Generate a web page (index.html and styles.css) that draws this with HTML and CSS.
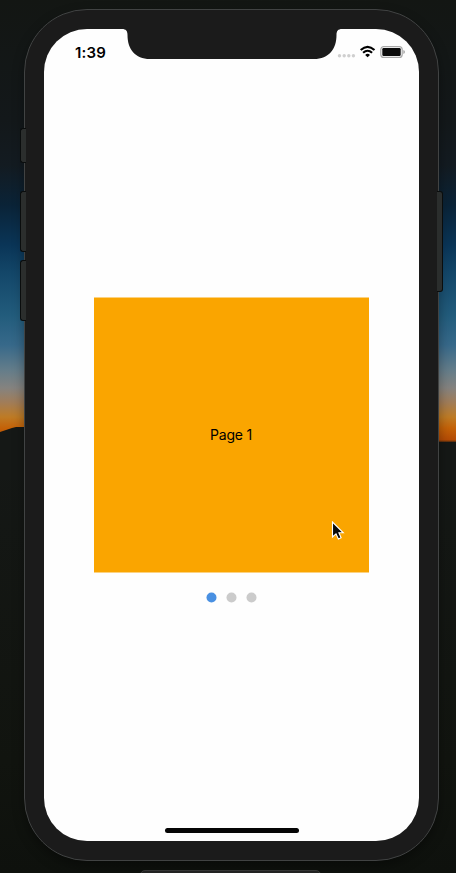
FILE: index.html
```
<!DOCTYPE html>
<html lang="en">
<head>
<meta charset="utf-8">
<title>Pager</title>
<link rel="stylesheet" href="styles.css">
</head>
<body>
<div class="desktop">
  <svg class="ridge" viewBox="0 0 456 60" width="456" height="60" aria-hidden="true">
    <path d="M0 12L6 10L12 8L16 7H25L439 22H456V60H0Z" fill="#151816"/>
  </svg>
  <main class="phone">
    <span class="key key-mute"></span>
    <span class="key key-up"></span>
    <span class="key key-down"></span>
    <span class="key key-power"></span>
    <div class="screen">
      <svg class="notch" viewBox="0 0 220 30" width="220" height="30" aria-hidden="true">
        <path d="M0 0C4 0 5.500 2 5.500 6C5.500 20 13 30 28 30H192C207 30 214.500 20 214.500 6C214.500 2 216 0 220 0Z" fill="#1b1b1b"/>
      </svg>
      <header class="status">
        <span class="time">1:39</span>
        <svg class="indicators" viewBox="0 0 68 16" width="68" height="16" aria-hidden="true">
          <g fill="#cfcfcf">
            <circle cx="2.500" cy="11.800" r="1.700"/><circle cx="7.200" cy="11.800" r="1.700"/><circle cx="11.800" cy="11.800" r="1.700"/><circle cx="16.400" cy="11.800" r="1.700"/>
          </g>
          <g fill="none" stroke="#000" stroke-width="2.100">
            <path d="M23.700 6.100Q30.600 -.3 37.500 6.100"/>
            <path d="M26.100 8.800Q30.600 4.700 35.100 8.800"/>
          </g>
          <path d="M28.200 10.900Q30.600 8.800 33 10.900L30.600 13.300Z"/>
          <rect x="43.800" y="2.600" width="21.400" height="10.800" rx="3" fill="#fff" stroke="#a9a9a9" stroke-width="1.200"/>
          <rect x="45.300" y="4.100" width="18.400" height="7.800" rx="1.200" fill="#0b0b0b"/>
          <path d="M66.300 6Q68 6.600 68 8T66.300 10Z" fill="#a9a9a9"/>
        </svg>
      </header>
      <section class="pager">
        <div class="page"><span class="label">Page 1</span></div>
        <svg class="dots" viewBox="0 0 52 12" width="52" height="12" aria-hidden="true">
          <circle cx="5.500" cy="5.500" r="5" fill="#4990e2"/>
          <circle cx="25.500" cy="5.500" r="5" fill="#cbcbcb"/>
          <circle cx="45.500" cy="5.500" r="5" fill="#cbcbcb"/>
        </svg>
      </section>
      <div class="home"></div>
    </div>
  </main>
  <div class="toolbar"></div>
  <svg class="cursor" viewBox="0 0 14 20" width="14" height="20" aria-hidden="true">
    <path d="M1.500 1V16L5 12.800L7.400 18L10.100 16.800L7.900 11.800H12.300Z" fill="#0a0a0a" stroke="#fff" stroke-width="1.100"/>
  </svg>
</div>
</body>
</html>
```
FILE: styles.css
```
* {
  box-sizing: border-box;
}

body {
  margin: 0;
  font-family: Inter, "Liberation Sans", sans-serif;
  color: #000;
}

.desktop {
  position: relative;
  width: 456px;
  height: 873px;
  overflow: hidden;
  padding: 9px 17px 0 24px;
  background: linear-gradient(#131613 0, #13181a 120px, #131b21 165px, #0a2337 205px, #0a3557 245px, #14486a 275px, #225c7c 315px, #37698a 345px, #647d8a 370px, #85837f 388px, #a07d5a 402px, #be7b25 417px, #c46208 428px, #b44b05 440px, #151816 443px, #11140f 760px, #0e110d 100%);
}

.ridge {
  position: absolute;
  left: 0;
  top: 420px;
}

.phone {
  position: relative;
  width: 415px;
  height: 852px;
  padding: 19px;
  border: 1px solid #414343;
  border-radius: 63px;
  background: #1b1b1b;
  box-shadow: 0 5px 12px rgba(0, 0, 0, .35);
}

.key {
  position: absolute;
  left: -5px;
  width: 6px;
  border: 1px solid #0a0d0d;
  border-right: 0;
  border-radius: 3px 0 0 3px;
  background: #2b2e2d;
}

.key-mute {
  top: 118px;
  height: 35px;
}

.key-up {
  top: 181px;
  height: 61px;
}

.key-down {
  top: 250px;
  height: 61px;
}

.key-power {
  left: 412px;
  top: 181px;
  height: 101px;
  border: 1px solid #0a0d0d;
  border-left: 0;
  border-radius: 0 3px 3px 0;
}

.screen {
  position: relative;
  display: flex;
  flex-direction: column;
  align-items: center;
  width: 375px;
  height: 812px;
  border-radius: 43px;
  background: #fefefe;
}

.notch {
  position: absolute;
  left: 78px;
  top: 0;
}

.status {
  display: flex;
  justify-content: space-between;
  width: 100%;
  height: 44px;
  padding: 15px 14px 0 31px;
}

.time {
  font-size: 15px;
  font-weight: 600;
  line-height: 17px;
  letter-spacing: .2px;
}

.pager {
  display: flex;
  flex-direction: column;
  align-items: center;
  width: 275px;
  padding-top: 224px;
}

.page {
  display: grid;
  place-items: center;
  width: 275px;
  height: 276px;
  border: solid #fcd280;
  border-width: 1px 0;
  background: #faa500;
  background-clip: padding-box;
  font-size: 14px;
}

.label {
  padding: 0 1px 1px 0;
  letter-spacing: -.2px;
}

.dots {
  display: block;
  margin: 19px 0 0 1px;
}

.home {
  width: 134px;
  height: 5px;
  margin: auto 0 8px;
  border-radius: 3px;
  background: #050505;
}

.toolbar {
  width: 181px;
  height: 20px;
  margin: 9px 0 0 116px;
  border: 1px solid #3a3b3a;
  border-radius: 5px;
  background: #242524;
}

.cursor {
  position: absolute;
  left: 331px;
  top: 521px;
}
```
